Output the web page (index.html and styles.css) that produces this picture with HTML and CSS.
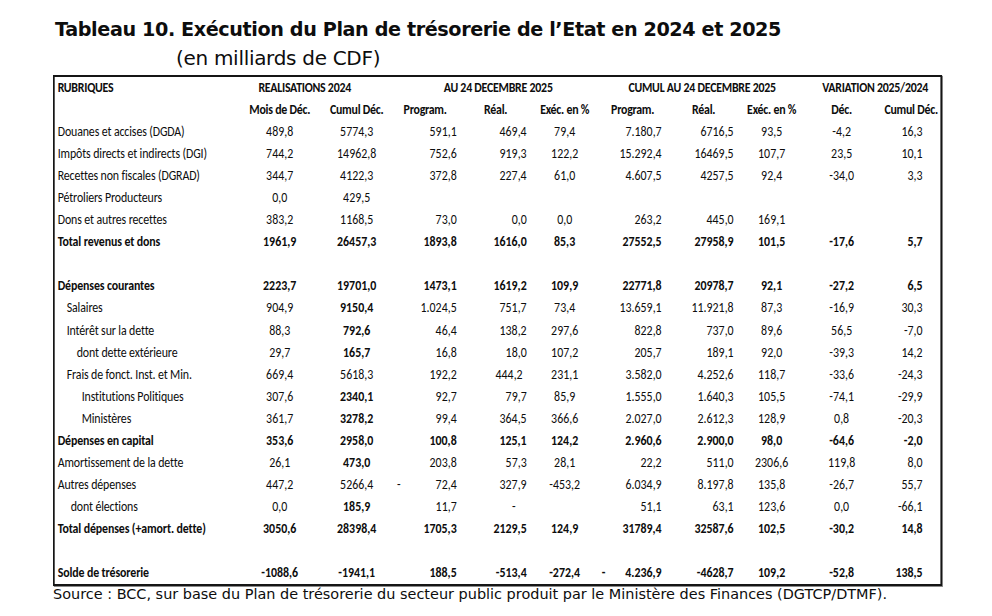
FILE: index.html
```html
<!DOCTYPE html>
<html lang="fr">
<head>
<meta charset="utf-8">
<title>Tableau 10</title>
<link rel="stylesheet" href="styles.css">
</head>
<body>
<div class="page">
  <h1 class="title">Tableau 10. Exécution du Plan de trésorerie de l’Etat en 2024 et 2025</h1>
  <p class="subtitle">(en milliards de CDF)</p>
  <div class="table">
    <div class="row head1">
      <span class="rub">RUBRIQUES</span>
      <span class="g1">REALISATIONS 2024</span>
      <span class="g2">AU 24 DECEMBRE 2025</span>
      <span class="g3">CUMUL AU 24 DECEMBRE 2025</span>
      <span class="g4">VARIATION 2025/2024</span>
    </div>
    <div class="row head2">
      <span></span><span>Mois de Déc.</span><span>Cumul Déc.</span><span>Program.</span><span>Réal.</span><span>Exéc. en %</span><span>Program.</span><span>Réal.</span><span>Exéc. en %</span><span>Déc.</span><span>Cumul Déc.</span>
    </div>
    <div class="row"><span>Douanes et accises (DGDA)</span><span>489,8</span><span>5774,3</span><span>591,1</span><span>469,4</span><span>79,4</span><span>7.180,7</span><span>6716,5</span><span>93,5</span><span>-4,2</span><span>16,3</span></div>
    <div class="row"><span>Impôts directs et indirects (DGI)</span><span>744,2</span><span>14962,8</span><span>752,6</span><span>919,3</span><span>122,2</span><span>15.292,4</span><span>16469,5</span><span>107,7</span><span>23,5</span><span>10,1</span></div>
    <div class="row"><span>Recettes non fiscales (DGRAD)</span><span>344,7</span><span>4122,3</span><span>372,8</span><span>227,4</span><span>61,0</span><span>4.607,5</span><span>4257,5</span><span>92,4</span><span>-34,0</span><span>3,3</span></div>
    <div class="row"><span>Pétroliers Producteurs</span><span>0,0</span><span>429,5</span><span></span><span></span><span></span><span></span><span></span><span></span><span></span><span></span></div>
    <div class="row"><span>Dons et autres recettes</span><span>383,2</span><span>1168,5</span><span>73,0</span><span>0,0</span><span>0,0</span><span>263,2</span><span>445,0</span><span>169,1</span><span></span><span></span></div>
    <div class="row bold"><span>Total revenus et dons</span><span>1961,9</span><span>26457,3</span><span>1893,8</span><span>1616,0</span><span>85,3</span><span>27552,5</span><span>27958,9</span><span>101,5</span><span>-17,6</span><span>5,7</span></div>
    <div class="row blank"></div>
    <div class="row bold"><span>Dépenses courantes</span><span>2223,7</span><span>19701,0</span><span>1473,1</span><span>1619,2</span><span>109,9</span><span>22771,8</span><span>20978,7</span><span>92,1</span><span>-27,2</span><span>6,5</span></div>
    <div class="row"><span class="ind1">Salaires</span><span>904,9</span><span class="b">9150,4</span><span>1.024,5</span><span>751,7</span><span>73,4</span><span>13.659,1</span><span>11.921,8</span><span>87,3</span><span>-16,9</span><span>30,3</span></div>
    <div class="row"><span class="ind1">Intérêt sur la dette</span><span>88,3</span><span class="b">792,6</span><span>46,4</span><span>138,2</span><span>297,6</span><span>822,8</span><span>737,0</span><span>89,6</span><span>56,5</span><span>-7,0</span></div>
    <div class="row"><span class="ind2">dont dette extérieure</span><span>29,7</span><span class="b">165,7</span><span>16,8</span><span>18,0</span><span>107,2</span><span>205,7</span><span>189,1</span><span>92,0</span><span>-39,3</span><span>14,2</span></div>
    <div class="row"><span class="ind1">Frais de fonct. Inst. et Min.</span><span>669,4</span><span>5618,3</span><span>192,2</span><span class="shift">444,2</span><span>231,1</span><span>3.582,0</span><span>4.252,6</span><span>118,7</span><span>-33,6</span><span>-24,3</span></div>
    <div class="row"><span class="ind3">Institutions Politiques</span><span>307,6</span><span class="b">2340,1</span><span>92,7</span><span>79,7</span><span>85,9</span><span>1.555,0</span><span>1.640,3</span><span>105,5</span><span>-74,1</span><span>-29,9</span></div>
    <div class="row"><span class="ind3">Ministères</span><span>361,7</span><span class="b">3278,2</span><span>99,4</span><span>364,5</span><span>366,6</span><span>2.027,0</span><span>2.612,3</span><span>128,9</span><span>0,8</span><span>-20,3</span></div>
    <div class="row bold"><span>Dépenses en capital</span><span>353,6</span><span>2958,0</span><span>100,8</span><span>125,1</span><span>124,2</span><span>2.960,6</span><span>2.900,0</span><span>98,0</span><span>-64,6</span><span>-2,0</span></div>
    <div class="row"><span>Amortissement de la dette</span><span>26,1</span><span class="b">473,0</span><span>203,8</span><span>57,3</span><span>28,1</span><span>22,2</span><span>511,0</span><span>2306,6</span><span>119,8</span><span>8,0</span></div>
    <div class="row"><span>Autres dépenses</span><span>447,2</span><span>5266,4</span><span class="split"><i class="dash">-</i>72,4</span><span>327,9</span><span>-453,2</span><span>6.034,9</span><span>8.197,8</span><span>135,8</span><span>-26,7</span><span>55,7</span></div>
    <div class="row"><span class="ind4">dont élections</span><span>0,0</span><span class="b">185,9</span><span>11,7</span><span class="lone">-</span><span></span><span>51,1</span><span>63,1</span><span>123,6</span><span>0,0</span><span>-66,1</span></div>
    <div class="row bold"><span>Total dépenses (+amort. dette)</span><span>3050,6</span><span>28398,4</span><span>1705,3</span><span>2129,5</span><span>124,9</span><span>31789,4</span><span>32587,6</span><span>102,5</span><span>-30,2</span><span>14,8</span></div>
    <div class="row blank"></div>
    <div class="row bold"><span>Solde de trésorerie</span><span>-1088,6</span><span>-1941,1</span><span>188,5</span><span>-513,4</span><span>-272,4</span><span class="split"><i class="dash">-</i>4.236,9</span><span>-4628,7</span><span>109,2</span><span>-52,8</span><span>138,5</span></div>
  </div>
  <p class="source">Source : BCC, sur base du Plan de trésorerie du secteur public produit par le Ministère des Finances (DGTCP/DTMF).</p>
</div>
</body>
</html>
```

FILE: styles.css
```css
html, body {
  margin: 0;
  padding: 0;
  background: #ffffff;
}

.page {
  width: 992px;
  height: 616px;
  overflow: hidden;
  color: #0d0d0d;
  font-family: "DejaVu Sans", Verdana, sans-serif;
}

.title {
  margin: 0;
  padding: 17px 0 0 55px;
  font-size: 19.2px;
  line-height: 26px;
  font-weight: bold;
  letter-spacing: -0.4px;
  white-space: nowrap;
}

.subtitle {
  margin: 0;
  padding: 2px 0 0 176px;
  font-size: 20px;
  line-height: 26px;
  letter-spacing: -0.3px;
}

/* The table is a horizontally condensed block (like a scaled spreadsheet picture).
   --k = 1 / scale, so widths below are given in on-screen pixels. */
.table {
  --k: 1.17647;
  margin: 4px 0 0 53px;
  width: calc(886px * var(--k));
  border: 2px solid #151515;
  box-shadow: 1px 1px 0 #8a8a8a;
  transform: scaleX(0.85);
  transform-origin: 0 0;
  font-family: "Carlito", "Liberation Sans Narrow", "DejaVu Sans Condensed", "Liberation Sans", sans-serif;
  font-size: 14px;
  letter-spacing: 0;
}

.row {
  display: grid;
  grid-template-columns:
    calc(190px * var(--k)) calc(70px * var(--k)) calc(84px * var(--k)) calc(61px * var(--k))
    calc(72px * var(--k)) calc(66px * var(--k)) calc(70px * var(--k)) calc(72px * var(--k))
    calc(64px * var(--k)) calc(76px * var(--k)) calc(61px * var(--k));
  height: 22.05px;
  align-items: center;
  line-height: 22px;
  white-space: nowrap;
}

.row > span:nth-child(1) { padding-left: calc(3px * var(--k)); text-align: left; letter-spacing: -0.15px; }
.row > span:nth-child(2) { text-align: center; }
.row > span:nth-child(3) { text-align: center; }
.row > span:nth-child(4) { text-align: right; padding-right: calc(3px * var(--k)); }
.row > span:nth-child(5) { text-align: right; padding-right: calc(5px * var(--k)); }
.row > span:nth-child(6) { text-align: center; }
.row > span:nth-child(7) { text-align: right; padding-right: calc(6px * var(--k)); }
.row > span:nth-child(8) { text-align: right; padding-right: calc(6px * var(--k)); }
.row > span:nth-child(9) { text-align: center; }
.row > span:nth-child(10) { text-align: center; }
.row > span:nth-child(11) { text-align: right; padding-right: calc(18px * var(--k)); }

.head1, .head2, .bold { font-weight: bold; }
.b { font-weight: bold; }

.row.head1 > span, .row.head2 > span { letter-spacing: -0.3px; }
.row.head2 > span:nth-child(n+2) { text-align: center; padding-right: 0; }
.row.head2 > span:nth-child(4) { padding-right: calc(8px * var(--k)); }
.row.head2 > span:nth-child(11) { padding-right: 0; padding-left: calc(2px * var(--k)); }

.row.head1 > span.rub { padding-left: calc(3px * var(--k)); }
.row.head1 > span.g1 { grid-column: 2 / span 2; text-align: center; padding: 0 calc(34px * var(--k)) 0 0; }
.row.head1 > span.g2 { grid-column: 4 / span 3; text-align: center; padding: 0; }
.row.head1 > span.g3 { grid-column: 7 / span 3; text-align: center; padding: 0 0 0 calc(3px * var(--k)); }
.row.head1 > span.g4 { grid-column: 10 / span 2; text-align: center; padding: 0 0 0 calc(6px * var(--k)); }

.row > span.ind1 { padding-left: calc(12px * var(--k)); }
.row > span.ind2 { padding-left: calc(22px * var(--k)); }
.row > span.ind3 { padding-left: calc(27px * var(--k)); }
.row > span.ind4 { padding-left: calc(16px * var(--k)); }

.row > span.shift { padding-right: calc(9px * var(--k)); }

.row > span.split {
  display: flex;
  justify-content: space-between;
}
.dash {
  font-style: normal;
  margin-left: -2px;
}
.row > span:nth-child(7).split .dash { margin-left: calc(4px * var(--k)); }
.row > span.lone { padding-right: calc(16px * var(--k)); }

.source {
  margin: 0 0 0 53px;
  font-size: 14.45px;
  line-height: 16px;
  letter-spacing: 0;
  white-space: nowrap;
}
```
